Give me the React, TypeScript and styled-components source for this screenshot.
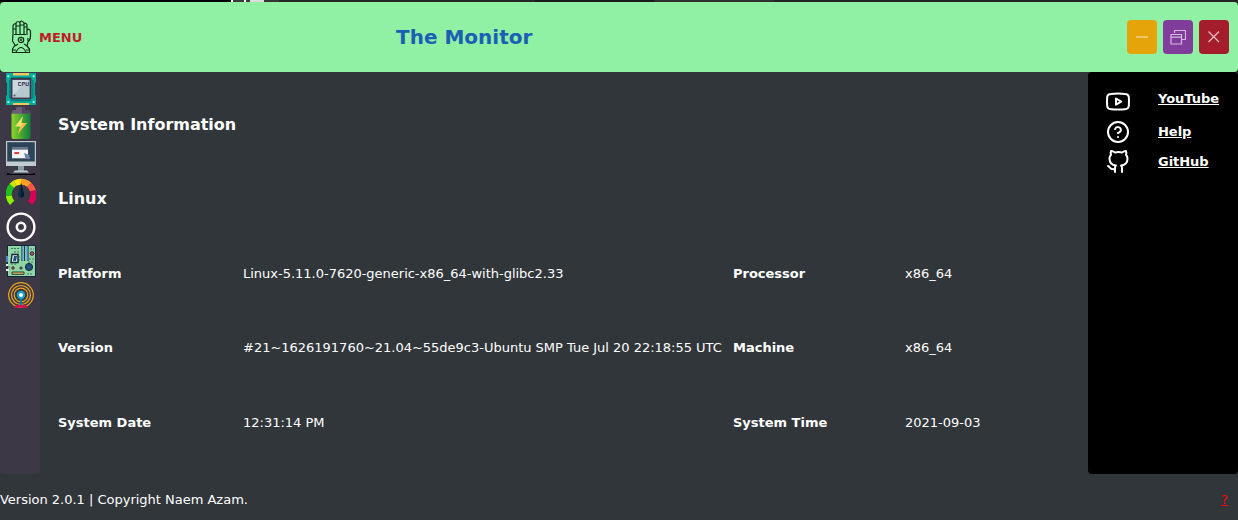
import React from "react";
import styled, { createGlobalStyle } from "styled-components";

const GlobalStyle = createGlobalStyle`
  * { box-sizing: border-box; }
  body { margin: 0; background: #31363b; overflow: hidden; }
`;

const Window = styled.div`
  width: 1238px;
  height: 520px;
  display: flex;
  flex-direction: column;
  background: #31363b;
  color: #fff;
  font: 13px/16px "DejaVu Sans", sans-serif;
`;

const BackdropStrip = styled.div`
  height: 2px;
  flex: none;
  background: linear-gradient(90deg, #000 231px, #fff 231px 233px, #3a3a3a 233px 244px, #fff 244px 246px,
    #3a3a3a 246px 250px, #ddd 250px 264px, #363636 264px 279px, #272525 279px 535px, #1d1c1b 535px 654px,
    #312f2f 654px 774px, #252423 774px);
`;

const TitleArea = styled.div`
  flex: none;
  height: 70px;
  background: #1b1f22;
`;

const TitleBar = styled.header`
  height: 70px;
  display: flex;
  align-items: center;
  padding: 0 9px 0 11px;
  border-radius: 4px;
  background: #90f0a4;
`;

const MenuButton = styled.button`
  display: flex;
  align-items: center;
  gap: 7px;
  width: 385px;
  padding: 0;
  border: 0;
  background: none;
  color: #c01c28;
  font: bold 13px/16px "DejaVu Sans", sans-serif;
`;

const MenuText = styled.span`
  padding-top: 2px;
`;

const Title = styled.h1`
  flex: 1;
  margin: 0;
  color: #1a5fb4;
  font-size: 20px;
  line-height: 24px;
`;

const WindowControls = styled.div`
  display: flex;
  gap: 6px;
`;

const ControlButton = styled.button<{ $color: string }>`
  width: 30px;
  height: 34px;
  display: grid;
  place-items: center;
  padding: 0;
  border: 0;
  border-radius: 4px;
  background: ${(p) => p.$color};
`;

const Body = styled.div`
  height: 402px;
  flex: none;
  display: flex;
`;

const Sidebar = styled.nav`
  width: 40px;
  display: flex;
  flex-direction: column;
  padding-left: 6px;
  border-radius: 0 0 4px 4px;
  background: #3d3846;
`;

const SideIcon = styled.svg`
  display: block;
  flex: none;
`;

const Info = styled.main`
  flex: 1;
  display: grid;
  grid-template-columns: 185px 490px 172px 1fr;
  grid-template-rows: repeat(5, 74.5px);
  align-items: center;
  padding: 15.5px 0 0 18px;
  white-space: nowrap;
  letter-spacing: -0.01px;
`;

const Heading = styled.h2`
  grid-column: 1 / -1;
  margin: 0;
  font-size: 16px;
  line-height: 20px;
`;

const Label = styled.span`
  font-weight: bold;
`;

const Value = styled.span``;

const LinksPanel = styled.aside`
  width: 150px;
  padding: 14px 0 0 18px;
  border-radius: 4px;
  background: #000;
`;

const LinkRow = styled.div<{ $height: number }>`
  height: ${(p) => p.$height}px;
  display: flex;
  align-items: flex-start;
  gap: 28px;
`;

const PanelLink = styled.a<{ $drop: number }>`
  padding-top: ${(p) => p.$drop}px;
  color: #fff;
  font-weight: bold;
  letter-spacing: -0.03px;
  text-decoration: underline;
`;

const Footer = styled.footer`
  flex: 1;
  display: flex;
  align-items: center;
  justify-content: space-between;
  padding: 5px 10px 0 0;
  letter-spacing: -0.01px;
`;

const HelpMark = styled.a`
  color: #f00;
  text-decoration: underline;
`;

const Hand = () => (
  <svg width="21" height="34" viewBox="0 0 21 34" fill="none" stroke="#102a18" strokeWidth="1.2" strokeLinejoin="round">
    <path d="M2 15V6Q3 3 5 4V15M5 14V3Q7 0 9 3V14M9 14V2Q11 0 13 3V14M13 14V4Q15 2 16 5V15M2 14 1.5 21 4 25 1.5 29V32.5H18.5V29L16 26 17 22Q19.5 20 19.5 16V11Q18 8 16.5 10" />
    <path d="M2 9H5M5 6H9M9 5H13M13 7H16M3 14.5H15M4 26 7 24M13 24 16 26M5 32Q10 23 15 32M2 30H5M15 30H18M17 18V21" />
    <circle cx="10" cy="20" r="2.7" /><circle cx="10" cy="20" r=".5" />
  </svg>
);

const Cpu = () => (
  <SideIcon width="30" height="34" viewBox="0 0 30 34">
    <path fill="#00ad9b" d="M0 1h30v9l-1 1v12l1 1v9H0v-9l1-1V11l-1-1z" />
    <path fill="#f5c55f" d="M7 1h16v2.5H7zM7 31h16v2H7z" />
    <path fill="#007e78" d="M5 5h20v2H5zM3 8h1.2v18H3zM26.3 8h1.2v18h-1.2zM5 28h20v1.2H5z" />
    <path fill="#9ff1d7" d="M1.3 3.2h2v2h-2zM26.7 3.2h2v2h-2zM1.3 29h2v2h-2zM26.7 29h2v2h-2z" />
    <rect x="5.5" y="7" width="19" height="19.5" fill="#b8c8cf" stroke="#3e3551" strokeWidth="1.8" />
    <path fill="#cad8de" d="M7 8h15L7 23z" />
    <g fill="none" stroke="#3e3551" strokeWidth=".9"><path d="M15 10.5h-2.3v3H15M16.2 14v-3.5h2.3V12h-2.3M20 10v3.5h2.3V10" /></g>
    <circle cx="8.5" cy="23.5" r="1" fill="#674665" />
  </SideIcon>
);

const Battery = () => (
  <SideIcon width="30" height="35" viewBox="0 0 30 35">
    <defs><linearGradient id="cell"><stop stopColor="#8fd52d" /><stop offset=".55" stopColor="#44a435" /><stop offset="1" stopColor="#137d3d" /></linearGradient></defs>
    <path fill="#695e75" d="M10 4V2.5q0-1.5 2-1.5h5q2 0 2 1.5V4h3q2.5 0 2.5 2v2.5H5.5V6q0-2 2.5-2z" />
    <path fill="#51485f" d="M16 1h1q2 0 2 1.5V4h3q2.5 0 2.5 2v2.5H16z" />
    <path fill="url(#cell)" d="M5.5 7.7h19V31q0 2-2 2h-15q-2 0-2-2z" />
    <path fill="#ffe268" d="M17 10 9 20.5h5.5L12 27.5l8.8-10.5h-5.5z" /><path fill="#ffb94c" d="m17 17-2.5 3.5-2.5 7 8.8-10.5z" />
  </SideIcon>
);

const Desktop = () => (
  <SideIcon width="30" height="34" viewBox="0 0 30 34">
    <path fill="#c0cbd0" d="M0 0h30v25H0z" /><path fill="#2d4358" d="M1.2 1.2h27.6v19.3H1.2z" />
    <path fill="#f4f5f6" d="M6 6.7h16v10.6H6z" /><path fill="#64758c" d="M6 6.7h16v2H6z" />
    <path fill="#e63f3d" d="M8.3 11h4.8v2H8.3z" /><path fill="#6d86ae" d="m18 12 6 2-1 1.5 1.5 1.5-1.8 1.5-1.5-1.5-1.5 1z" />
    <path fill="#889ca4" d="M12 25h6v5h-6z" /><path fill="#bdcdd2" d="M9 29.5h12l2 2H7z" />
    <path d="M1 32.8q2 1 5 1h18q3 0 5-1" fill="none" stroke="#000" strokeWidth="1.8" />
  </SideIcon>
);

const Gauge = () => (
  <SideIcon width="30" height="34" viewBox="0 0 30 34" fill="none" strokeWidth="6">
    <path stroke="#8ef000" d="M6.1 27.9A12.3 12.3 0 0 1 2.8 20.5" /><path stroke="#20bd20" d="M2.9 20.8A12.3 12.3 0 0 1 6.2 10.4" />
    <path stroke="#c5e900" d="M5.9 10.7A12.3 12.3 0 0 1 9 8.2" /><path stroke="#ffe20b" d="M9 8.2A12.3 12.3 0 0 1 15 6.7" />
    <path stroke="#ff9d28" d="M15 6.7A12.3 12.3 0 0 1 23.3 9.9" /><path stroke="#ff5545" d="M23.3 9.9A12.3 12.3 0 0 1 27 15.8" />
    <path stroke="#d90055" d="M27 15.8A12.3 12.3 0 0 1 23.9 27.9" />
    <path fill="#082f45" stroke="none" d="m15 7.7-3 11q0 4 3 4t3-4z" /><path fill="#001c30" stroke="none" d="m15 7.7 3 11q0 4-3 4z" />
  </SideIcon>
);

const Disc = () => (
  <SideIcon width="30" height="35" viewBox="0 0 30 35" fill="none" stroke="#fff">
    <circle cx="15" cy="18" r="13.4" strokeWidth="2.4" /><circle cx="15" cy="18" r="4.2" strokeWidth="2.5" />
  </SideIcon>
);

const Board = () => (
  <SideIcon width="30" height="34" viewBox="0 0 30 34">
    <rect x="1.5" y="1.5" width="28" height="31" fill="#90d6a4" stroke="#10283b" />
    <path d="M16 2v15M18.5 2v15M22 2v15" stroke="#163958" strokeWidth="1.2" /><path d="M17.1 2v14.5M20.7 2v14.5" stroke="#71abf0" strokeWidth="1.2" />
    <path d="M5 4.5h9M8 8h5M5 20h5M13 12v6M3 22v4M21 30h6M24 5h4M23 15h5M22 18h6" fill="none" stroke="#3c7464" strokeWidth="1" strokeDasharray="2 1" />
    <path fill="#e8edef" stroke="#10283b" strokeWidth="1.4" d="M6 10.5h6v8H5z" /><path fill="#244f79" d="M8 12h3l-1 5H7z" /><path fill="#4c88ca" d="M0 12h2v6H0z" /><path fill="#eee" d="M0 20h2v2H0zM0 25h3v2H0z" />
    <circle cx="26" cy="9.5" r="1.8" fill="#ea4a55" stroke="#10283b" /><circle cx="23" cy="23" r="3.6" fill="#244f79" stroke="#10283b" />
    <circle cx="7" cy="24" r="1.4" fill="#8e4150" stroke="#24453c" strokeWidth=".6" /><circle cx="15" cy="24" r="1.3" fill="#8e4150" stroke="#24453c" strokeWidth=".6" />
    <path fill="#e6bb6a" stroke="#253b35" d="M6 28h12v2.3H6z" />
  </SideIcon>
);

const Signal = () => (
  <SideIcon width="30" height="30" viewBox="0 0 30 30" fill="none">
    <g stroke="#eda51b" strokeWidth="1.2"><circle cx="15" cy="17" r="12.3" /><circle cx="15" cy="17" r="9.5" /><circle cx="15" cy="17" r="6.8" /></g>
    <path stroke="#087da4" strokeWidth="2" d="M15 18v10" /><circle cx="15" cy="17" r="3.1" fill="#fff" stroke="#14a1c5" strokeWidth="2.2" />
    <path fill="#d90b52" d="M10 27h10l1.5 2.7h-13z" />
  </SideIcon>
);

const LinkIcon = styled.svg.attrs({
  width: 24, height: 24, viewBox: "0 0 24 24", fill: "none", stroke: "#fff",
  strokeWidth: 2, strokeLinecap: "round", strokeLinejoin: "round",
})`
  display: block;
  flex: none;
  overflow: visible;
`;

const rows = [
  ["Platform", "Linux-5.11.0-7620-generic-x86_64-with-glibc2.33", "Processor", "x86_64"],
  ["Version", "#21~1626191760~21.04~55de9c3-Ubuntu SMP Tue Jul 20 22:18:55 UTC", "Machine", "x86_64"],
  ["System Date", "12:31:14 PM", "System Time", "2021-09-03"],
];

export default function App() {
  return (
    <>
      <GlobalStyle />
      <Window>
        <BackdropStrip />
        <TitleArea>
          <TitleBar>
            <MenuButton><Hand /><MenuText>MENU</MenuText></MenuButton>
            <Title>The Monitor</Title>
            <WindowControls>
              <ControlButton $color="#e5a50a">
                <svg width="16" height="16" viewBox="0 0 16 16"><path d="M2 8h12" stroke="#efcf88" strokeWidth="1.6" /></svg>
              </ControlButton>
              <ControlButton $color="#813d9c">
                <svg width="16" height="16" viewBox="0 0 16 16" fill="none" stroke="#d5b9de" strokeWidth="1.2">
                  <path d="M4.5 4V1.5h11v9H12M1 5.5h10.5V15H1zM1 8.2h10.5" />
                </svg>
              </ControlButton>
              <ControlButton $color="#a51d2d">
                <svg width="16" height="16" viewBox="0 0 16 16"><path d="m2.5 2.5 10.5 10.5M13 2.5 2.5 13" stroke="#e6c2c6" strokeWidth="1.2" /></svg>
              </ControlButton>
            </WindowControls>
          </TitleBar>
        </TitleArea>
        <Body>
          <Sidebar>
            <Cpu /><Battery /><Desktop /><Gauge /><Disc /><Board /><Signal />
          </Sidebar>
          <Info>
            <Heading>System Information</Heading>
            <Heading>Linux</Heading>
            {rows.map(([label, value, label2, value2]) => (
              <React.Fragment key={label}>
                <Label>{label}</Label><Value>{value}</Value>
                <Label>{label2}</Label><Value>{value2}</Value>
              </React.Fragment>
            ))}
          </Info>
          <LinksPanel>
            <LinkRow $height={34}>
              <LinkIcon>
                <path d="M5 8Q12 7.2 19 8Q22.5 8 22.8 11Q23.2 15.5 22.8 20Q22.5 23 19 23.2Q12 23.7 5 23.2Q1.5 23 1.2 20Q.8 15.5 1.2 11Q1.5 8 5 8zM10 12.5v6.2l5.2-3.1z" />
              </LinkIcon>
              <PanelLink $drop={5}>YouTube</PanelLink>
            </LinkRow>
            <LinkRow $height={29}>
              <LinkIcon>
                <circle cx="12" cy="12" r="10" /><path d="M9.1 9a3 3 0 0 1 5.8 1c0 2-3 3-3 3M12 17h.01" />
              </LinkIcon>
              <PanelLink $drop={4}>Help</PanelLink>
            </LinkRow>
            <LinkRow $height={30}>
              <LinkIcon>
                <path transform="translate(0 1)" d="M9 19c-5 1.5-5-2.5-7-3m14 6v-3.87a3.37 3.37 0 0 0-.94-2.61c3.14-.35 6.44-1.54 6.44-7A5.44 5.44 0 0 0 20 4.77 5.07 5.07 0 0 0 19.91 1S18.73.65 16 2.48a13.38 13.38 0 0 0-7 0C6.27.65 5.09 1 5.09 1A5.07 5.07 0 0 0 5 4.77a5.44 5.44 0 0 0-1.5 3.78c0 5.42 3.3 6.61 6.44 7A3.37 3.37 0 0 0 9 18.13V22" />
              </LinkIcon>
              <PanelLink $drop={5}>GitHub</PanelLink>
            </LinkRow>
          </LinksPanel>
        </Body>
        <Footer>
          <span>Version 2.0.1 | Copyright Naem Azam.</span>
          <HelpMark>?</HelpMark>
        </Footer>
      </Window>
    </>
  );
}
